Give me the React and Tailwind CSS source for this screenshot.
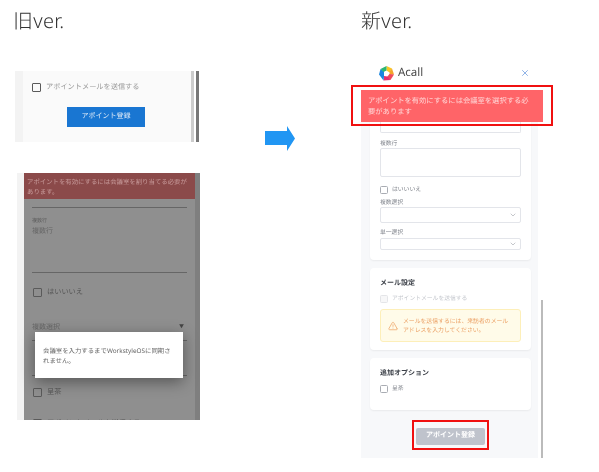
import React from 'react';
import { ChevronDown, X, TriangleAlert } from 'lucide-react';

const jp = { fontFamily: '"Noto Sans", "Noto Sans CJK JP", sans-serif' };

const Box = ({ className = '' }) => <span className={`block shrink-0 ${className}`} />;

const OldCheck = ({ label, className = '' }) => (
  <div className={`flex items-center gap-[5px] text-[7.2px] leading-[10px] ${className}`}>
    <Box className="w-[9px] h-[9px] border border-[#5a5a5a] rounded-[1px]" />
    <span>{label}</span>
  </div>
);

const NewCheck = ({ label, disabled }) => (
  <div className={`flex items-center gap-[4px] text-[5.8px] leading-[9px] ${disabled ? 'text-[#c4c7cd]' : 'text-[#7b7f87]'}`}>
    <Box className={`w-[8px] h-[8px] border rounded-[1.5px] ${disabled ? 'border-[#e4e5e8] bg-[#f7f7f8]' : 'border-[#a9acb3]'}`} />
    <span>{label}</span>
  </div>
);

const Select = ({ className = '' }) => (
  <div className={`flex items-center justify-end pr-[3px] border border-[#e3e5ea] rounded-[2px] bg-white ${className}`}>
    <ChevronDown size={8} strokeWidth={1.5} className="text-[#8b8f96]" />
  </div>
);

const Logo = () => (
  <svg width="15" height="15" viewBox="0 0 30 30">
    <path d="M15 0 L26 5 L21 13 L15 9 Z" fill="#f9c623" />
    <path d="M26 5 L30 17 L21 17 L21 11 Z" fill="#f4a52c" />
    <path d="M30 17 L23 28 L16 22 L21 16 Z" fill="#ef4b5c" />
    <path d="M23 28 L9 29 L10 20 L17 21 Z" fill="#e6306e" />
    <path d="M9 29 L0 17 L3 6 L10 11 L10 21 Z" fill="#1a86e0" />
    <path d="M3 6 L15 0 L15 9 L9 12 Z" fill="#2bb573" />
    <path d="M12 10 L21 15 L12 20 Z" fill="#fff" />
  </svg>
);

const Arrow = () => (
  <svg width="30" height="25" viewBox="0 0 30 25" className="block">
    <path d="M0 5 H22 V0 L30 12.5 L22 25 V19 H0 Z" fill="#2196f3" />
  </svg>
);

function OldVersion() {
  return (
    <div className="w-[250px] pl-[13px] shrink-0">
      <h2 className="h-[22px] mt-[10px] text-[20px] leading-[22px] font-light tracking-[0.3px] text-[#333]" style={jp}>旧ver.</h2>

      <div className="flex w-[184px] h-[71px] ml-[2px] mt-[39px] bg-[#f3f3f3]">
        <div className="w-[8px]" />
        <div className="flex-1 bg-[#fafafa] pl-[9px] pt-[11px]">
          <OldCheck label="アポイントメールを送信する" className="text-[#9a9a9a] gap-[4px]" />
          <div className="flex items-center justify-center w-[78px] h-[20px] ml-[35px] mt-[15px] bg-[#1976d2] text-[#dfeaf7] text-[7px]">アポイント登録</div>
        </div>
        <div className="w-[3px] bg-[#cccccc]" />
        <div className="w-[2px] bg-white" />
        <div className="w-[3px] bg-[#777777]" />
      </div>

      <div className="relative flex w-[183px] h-[247px] ml-[4px] mt-[31px] overflow-hidden bg-[#f3f3f3]">
        <div className="w-[7px]" />
        <div className="flex-1 bg-[#8f8f8f] pl-[8px] pr-[8px] text-[#5c5c5c]">
          <div className="h-[35px] border-b border-[#666]" />
          <div className="mt-[10px] text-[5px] leading-[7px]">複数行</div>
          <div className="h-[47px] mt-[1px] text-[7px] leading-[12px] border-b border-[#666] text-[#666]">複数行</div>
          <OldCheck label="はいいいえ" className="mt-[14px] ml-[1px] text-[#555]" />
          <div className="flex justify-between items-center h-[12px] mt-[25px] text-[7px] text-[#666] pr-[3px]">
            <span>複数選択</span>
            <span className="text-[5px] text-[#444]">▼</span>
          </div>
          <div className="h-[35px] border-t border-[#666] mt-[6px]" />
          <div className="h-px bg-[#666]" />
          <OldCheck label="呈茶" className="mt-[11px] ml-[1px] text-[#555]" />
          <OldCheck label="アポイントメールを送信する" className="mt-[21px] ml-[1px] text-[#555]" />
        </div>
        <div className="w-[5px] bg-[#7f7f7f]" />

        <div className="absolute left-[7px] top-0 w-[171px] h-[26px] bg-[#8b4a4a] pl-[3px] pr-[6px] pt-[4px] text-[6.4px] leading-[10px] text-[#c79a9a]">
          アポイントを有効にするには会議室を割り当てる必要があります。
        </div>
        <div className="absolute left-[18px] top-[159px] w-[148px] h-[46px] bg-white shadow-[0_4px_14px_rgba(0,0,0,0.4)] px-[8px] pt-[14px] text-[6.4px] leading-[10px] text-[#666]">
          会議室を入力するまでWorkstyleOSに同期されません。
        </div>
      </div>
    </div>
  );
}

function NewVersion() {
  return (
    <div className="w-[349px] pl-[111px] shrink-0">
      <h2 className="h-[22px] mt-[10px] text-[20px] leading-[22px] font-light tracking-[0.3px] text-[#333]" style={jp}>新ver.</h2>

      <div className="relative w-[182px] h-[402px] mt-[24px] bg-[#f7f8fa] overflow-hidden">
        <div className="flex items-center h-[34px] bg-white pl-[18px] pr-[13px]">
          <Logo />
          <span className="ml-[4px] text-[11.5px] text-[#4a4a4a] flex-1" style={{ fontFamily: '"Noto Sans", sans-serif' }}>Acall</span>
          <X size={10} strokeWidth={1.5} className="text-[#4f86d8]" />
        </div>

        <div className="mx-[9px] w-[161px] h-[170px] bg-white rounded-[4px] shadow-[0_1px_2px_rgba(0,0,0,0.06)] px-[10px]">
          <div className="h-[43px] border-b border-x border-[#e3e5ea] rounded-b-[2px]" />
          <div className="mt-[6px] text-[5.8px] leading-[9px] text-[#7b7f87]">複数行</div>
          <div className="h-[29px] border border-[#e3e5ea] rounded-[2px]" />
          <div className="mt-[8px]"><NewCheck label="はいいいえ" /></div>
          <div className="mt-[4px] text-[5.8px] leading-[9px] text-[#7b7f87]">複数選択</div>
          <Select className="h-[16px]" />
          <div className="mt-[5px] text-[5.8px] leading-[9px] text-[#7b7f87]">単一選択</div>
          <Select className="h-[12px] mt-[1px]" />
        </div>

        <div className="mx-[9px] w-[161px] h-[82px] mt-[8px] bg-white rounded-[4px] shadow-[0_1px_2px_rgba(0,0,0,0.06)] px-[10px] pt-[11px]">
          <div className="text-[7px] leading-[10px] font-bold text-[#3c4048]">メール設定</div>
          <div className="mt-[5px]"><NewCheck label="アポイントメールを送信する" disabled /></div>
          <div className="flex items-center h-[33px] mt-[6px] pl-[7px] border border-[#fdefb9] rounded-[3px] bg-[#fffbe9]">
            <TriangleAlert size={10} strokeWidth={1.6} className="text-[#ec9a56] shrink-0" />
            <span className="ml-[5px] w-[108px] text-[5.85px] leading-[8.5px] text-[#eb9f63]">メールを送信するには、来訪者のメールアドレスを入力してください。</span>
          </div>
        </div>

        <div className="mx-[9px] w-[161px] h-[52px] mt-[8px] bg-white rounded-[4px] shadow-[0_1px_2px_rgba(0,0,0,0.06)] px-[10px] pt-[11px]">
          <div className="text-[7px] leading-[10px] font-bold text-[#3c4048]">追加オプション</div>
          <div className="mt-[5px]"><NewCheck label="呈茶" /></div>
        </div>

        <div className="flex items-center justify-center w-[69px] h-[17px] ml-[55px] mt-[18px] bg-[#bfc3cc] rounded-[2px] text-white text-[7px] font-bold">アポイント登録</div>

        <div className="absolute right-0 top-0 w-[5px] h-full bg-white" />
        <div className="absolute right-0 top-[244px] w-[2px] h-[158px] bg-[#bbbbbb]" />
        <div className="absolute left-0 top-[34px] w-full h-[32px] bg-[#ff6468] pl-[7px] pr-[8px] pt-[6px] text-[7.3px] leading-[11px] text-[#ffd5d5]">
          アポイントを有効にするには会議室を選択する必要があります
        </div>
      </div>

      <div className="absolute left-[351px] top-[85px] w-[202px] h-[41px] border-2 border-[#f01010]" />
      <div className="absolute left-[412px] top-[420px] w-[77px] h-[30px] border-2 border-[#f01010]" />
    </div>
  );
}

export default function App() {
  return (
    <div className="relative flex w-[599px] h-[472px] bg-white overflow-hidden blur-[0.3px] [text-rendering:geometricPrecision]" style={jp}>
      <OldVersion />
      <div className="absolute left-[265px] top-[126px]"><Arrow /></div>
      <NewVersion />
    </div>
  );
}
